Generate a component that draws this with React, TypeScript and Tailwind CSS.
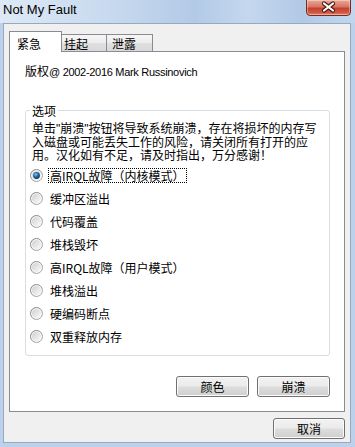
import React from 'react';

const options = [
  '高IRQL故障（内核模式）',
  '缓冲区溢出',
  '代码覆盖',
  '堆栈毁坏',
  '高IRQL故障（用户模式）',
  '堆栈溢出',
  '硬编码断点',
  '双重释放内存',
];

const descLines = [
  '单击"崩溃"按钮将导致系统崩溃，存在将损坏的内存写',
  '入磁盘或可能丢失工作的风险，请关闭所有打开的应',
  '用。汉化如有不足，请及时指出，万分感谢！',
];

function Radio({ checked }: { checked?: boolean }) {
  return (
    <svg width="13" height="13" viewBox="0 0 13 13" className="shrink-0">
      <defs>
        <linearGradient id="ring" x1="0" y1="0" x2="1" y2="1">
          <stop offset="0" stopColor="#7a7a7a" />
          <stop offset="1" stopColor="#b4b4b4" />
        </linearGradient>
        <linearGradient id="face" x1="0" y1="0" x2="1" y2="1">
          <stop offset="0" stopColor="#cfcfcf" />
          <stop offset="1" stopColor="#fbfbfb" />
        </linearGradient>
        <radialGradient id="dot" cx="0.4" cy="0.35" r="0.65">
          <stop offset="0" stopColor="#8fd0f5" />
          <stop offset="0.45" stopColor="#2e74b0" />
          <stop offset="1" stopColor="#0c3358" />
        </radialGradient>
      </defs>
      <circle cx="6.5" cy="6.5" r="6" fill="#f6f6f6" stroke="url(#ring)" strokeWidth="1" />
      <circle cx="6.5" cy="6.5" r="4.6" fill="url(#face)" />
      {checked && <circle cx="6.5" cy="6.5" r="3.4" fill="url(#dot)" />}
    </svg>
  );
}

function Button({ label, className = '' }: { label: string; className?: string }) {
  return (
    <button
      className={`flex items-center justify-center rounded-[3px] border border-[#707070] bg-[linear-gradient(180deg,#f2f2f2_0%,#ebebeb_48%,#dddddd_52%,#cfcfcf_100%)] text-[12px] leading-[13px] text-black shadow-[inset_0_0_0_1px_#fbfbfb] ${className}`}
    >
      {label}
    </button>
  );
}

export default function App() {
  return (
    <div className="flex h-[447px] w-[355px] flex-col overflow-hidden bg-[#bcd2ec] font-['Noto_Sans_CJK_SC',sans-serif] text-black">
      {/* Title bar */}
      <div className="flex h-[23px] shrink-0 items-start bg-[linear-gradient(90deg,#dde9f6_0%,#c8daef_30%,#b3cae6_55%,#c4d7ee_70%,#b2c9e5_85%,#c2d6ee_100%)]">
        <span className="pl-[3px] pt-[2px] font-['Liberation_Sans',sans-serif] text-[13px] leading-[15px] text-black">
          Not My Fault
        </span>
        <div className="-mt-px ml-auto mr-[4px] h-[17px] w-[45px] rounded-b-[4px] border border-[#7a2a20] bg-[linear-gradient(180deg,#e9a999_0%,#d97462_45%,#c4412e_55%,#cf5a46_85%,#e08a75_100%)] shadow-[inset_0_0_0_1px_rgba(255,255,255,0.35)]">
          <svg width="43" height="15" viewBox="0 0 43 15">
            <path d="M17 3.5 L26 10.5 M26 3.5 L17 10.5" stroke="#4a1810" strokeWidth="4.2" strokeLinecap="round" />
            <path d="M17 3.5 L26 10.5 M26 3.5 L17 10.5" stroke="#ffffff" strokeWidth="2.2" strokeLinecap="round" />
          </svg>
        </div>
      </div>

      {/* Client area */}
      <div className="ml-[3px] flex h-[420px] w-[348px] flex-col border border-[#98a9bd] bg-[#f0f0f0] px-[5px] pt-[7px]">
        {/* Tabs */}
        <div className="-mb-px flex items-end text-[12px] leading-[13px]">
          <div className="relative z-10 h-[21px] w-[53px] border border-b-0 border-[#898c95] bg-white pl-[7px] pt-[5px]">
            紧急
          </div>
          <div className="mb-px h-[17px] w-[45px] border border-b-0 border-l-0 border-[#898c95] bg-[linear-gradient(180deg,#f6f6f6_0%,#ececec_50%,#e0e0e0_52%,#d8d8d8_100%)] pl-[2px] pt-[2px]">
            挂起
          </div>
          <div className="mb-px h-[17px] w-[46px] border border-b-0 border-l-0 border-[#898c95] bg-[linear-gradient(180deg,#f6f6f6_0%,#ececec_50%,#e0e0e0_52%,#d8d8d8_100%)] pl-[5px] pt-[2px]">
            泄露
          </div>
        </div>

        {/* Tab page */}
        <div className="flex h-[361px] w-[336px] flex-col border border-[#898c95] bg-white px-[15px]">
          <div className="mt-[12px] font-['Liberation_Sans','Noto_Sans_CJK_SC',sans-serif] text-[11px] leading-[14px] tracking-[-0.3px]">
            <span className="font-['Noto_Sans_CJK_SC',sans-serif] text-[12px] tracking-normal">版权</span>@ 2002-2016 Mark Russinovich
          </div>

          <fieldset className="mt-[25px] w-[305px] rounded-[3px] border border-[#d5dfe5] pb-[7px]">
            <legend className="ml-[4px] px-[2px] text-[12px] leading-[13px]">选项</legend>
            <div className="flex flex-col pl-[6px] pt-[6px] font-['Liberation_Sans','Noto_Sans_CJK_SC',sans-serif] text-[12px]">
              {descLines.map((line) => (
                <div key={line} className="h-[13.5px] whitespace-nowrap leading-[13.5px]">
                  {line}
                </div>
              ))}
            </div>
            <div className="flex flex-col pl-[4px]">
              {options.map((label, i) => (
                <div key={label} className="flex h-[23px] items-center gap-[5px]">
                  <Radio checked={i === 0} />
                  <span
                    className={`whitespace-nowrap border px-px text-[12px] leading-[13px] ${
                      i === 0 ? 'border-dotted border-black' : 'border-transparent'
                    }`}
                  >
                    {label}
                  </span>
                </div>
              ))}
            </div>
          </fieldset>

          <div className="mt-[20px] flex w-[305px] justify-end gap-[8px]">
            <Button label="颜色" className="h-[21px] w-[73px]" />
            <Button label="崩溃" className="h-[21px] w-[73px]" />
          </div>
        </div>

        <div className="mt-[6px] flex w-[336px] justify-end">
          <Button label="取消" className="h-[21px] w-[72px]" />
        </div>
      </div>
    </div>
  );
}
